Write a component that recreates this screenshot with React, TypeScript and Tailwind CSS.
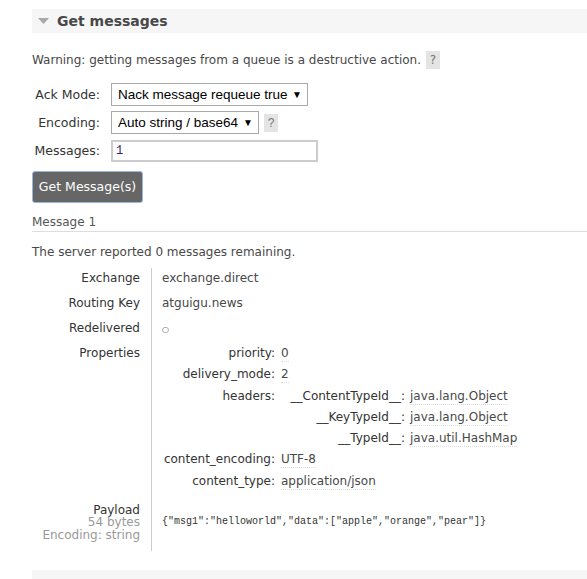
import React from "react";

const font = { fontFamily: '"DejaVu Sans", Verdana, sans-serif' };
const arial = { fontFamily: '"Liberation Sans", Arial, sans-serif' };

function Val({ children }: { children: React.ReactNode }) {
  return (
    <span className="border-b border-dotted border-[#ddd] pb-[1px] text-[#484848]">{children}</span>
  );
}

export default function App() {
  return (
    <div className="w-[587px] h-[579px] bg-white overflow-hidden pl-[32px] pt-[9px] text-[12px] leading-[18px] text-[#484848]" style={font}>
      <div className="h-[24px] bg-[#f6f6f6] flex items-center pl-[6px]">
        <svg width="11" height="7" viewBox="0 0 11 7" className="mr-[8px]">
          <polygon points="0,0 11,0 5.5,6" fill="#a8a8a8" />
        </svg>
        <span className="font-bold text-[14px] text-[#484848]">Get messages</span>
      </div>

      <div className="mt-[18px] flex items-center h-[18px]">
        <span>Warning: getting messages from a queue is a destructive action.</span>
        <span className="ml-[5px] bg-[#e4e4e4] h-[18px] w-[14px] flex items-center justify-center text-[#777]">?</span>
      </div>

      <div className="mt-[14px] flex flex-col">
        <div className="flex items-center h-[23px]">
          <span className="w-[68px] text-right text-[12.5px] text-[#333] mr-[11px] whitespace-nowrap">Ack Mode:</span>
          <div className="h-[23px] w-[197px] border border-[#a9a9a9] flex items-center justify-between pl-[6px] pr-[5px] text-[13.5px] text-black whitespace-nowrap" style={arial}>
            <span>Nack message requeue true</span>
            <span className="text-[10px]">▼</span>
          </div>
        </div>
        <div className="flex items-center h-[23px] mt-[5px]">
          <span className="w-[68px] text-right text-[12.5px] text-[#333] mr-[11px] whitespace-nowrap">Encoding:</span>
          <div className="h-[23px] w-[148px] border border-[#a9a9a9] flex items-center justify-between pl-[6px] pr-[5px] text-[13.5px] text-black whitespace-nowrap" style={arial}>
            <span>Auto string / base64</span>
            <span className="text-[10px]">▼</span>
          </div>
          <span className="ml-[5px] bg-[#e4e4e4] h-[18px] w-[14px] flex items-center justify-center text-[#777]" style={arial}>?</span>
        </div>
        <div className="flex items-center h-[22px] mt-[6px]">
          <span className="w-[68px] text-right text-[12.5px] text-[#333] mr-[11px] whitespace-nowrap">Messages:</span>
          <div className="h-[22px] w-[207px] border-2 border-[#ccc] flex items-center px-[3px] text-[12px] text-[#3a1a6a]" style={{ fontFamily: '"Liberation Mono", monospace' }}>
            1
          </div>
        </div>
      </div>

      <button className="mt-[9px] w-[111px] h-[32px] rounded-[3px] bg-[#666] border border-[#9ab4e6] text-white text-[12.5px] flex items-center justify-center" style={font}>
        Get Message(s)
      </button>

      <div className="mt-[10px] border-b border-[#ddd] text-[12px] text-[#555]">Message 1</div>

      <div className="mt-[11px]">The server reported 0 messages remaining.</div>

      <div className="mt-[7px] grid grid-cols-[120px_1fr]">
        <div className="border-r border-[#ccc] pr-[11px] text-right text-[#333] h-[25px] pt-[1px]">Exchange</div>
        <div className="pl-[10px] h-[25px] pt-[1px]">exchange.direct</div>
        <div className="border-r border-[#ccc] pr-[11px] text-right text-[#333] h-[25px] pt-[1px]">Routing Key</div>
        <div className="pl-[10px] h-[25px] pt-[1px]">atguigu.news</div>
        <div className="border-r border-[#ccc] pr-[11px] text-right text-[#333] h-[25px] pt-[1px]">Redelivered</div>
        <div className="pl-[10px] h-[25px] pt-[3px] text-[8px]">○</div>
        <div className="border-r border-[#ccc] pr-[11px] text-right text-[#333] pt-[1px]">Properties</div>
        <div className="pl-[10px] pt-[1px]">
          <div className="grid grid-cols-[119px_auto] gap-y-[3.3px] w-max">
            <div className="text-right text-[#333] pr-[6px]">priority:</div>
            <div><Val>0</Val></div>
            <div className="text-right text-[#333] pr-[6px]">delivery_mode:</div>
            <div><Val>2</Val></div>
            <div className="text-right text-[#333] pr-[6px]">headers:</div>
            <div>
              <div className="grid grid-cols-[129px_auto] gap-y-[3.3px]">
                <div className="text-right text-[#333] pr-[5px] whitespace-nowrap">__ContentTypeId__:</div>
                <div><Val>java.lang.Object</Val></div>
                <div className="text-right text-[#333] pr-[5px] whitespace-nowrap">__KeyTypeId__:</div>
                <div><Val>java.lang.Object</Val></div>
                <div className="text-right text-[#333] pr-[5px] whitespace-nowrap">__TypeId__:</div>
                <div><Val>java.util.HashMap</Val></div>
              </div>
            </div>
            <div className="text-right text-[#333] pr-[6px]">content_encoding:</div>
            <div><Val>UTF-8</Val></div>
            <div className="text-right text-[#333] pr-[6px]">content_type:</div>
            <div><Val>application/json</Val></div>
          </div>
        </div>
        <div className="border-r border-[#ccc] pr-[11px] text-right pt-[14px] pb-[10px] leading-[12.5px]">
          <div className="text-[#333]">Payload</div>
          <div className="text-[#999]">54 bytes</div>
          <div className="text-[#999]">Encoding: string</div>
        </div>
        <div className="pl-[10px] pt-[23px] text-[10px] text-[#333]" style={{ fontFamily: '"Liberation Mono", monospace' }}>
          {'{"msg1":"helloworld","data":["apple","orange","pear"]}'}
        </div>
      </div>

      <div className="mt-[19px] h-[10px] bg-[#f6f6f6]" />
    </div>
  );
}
